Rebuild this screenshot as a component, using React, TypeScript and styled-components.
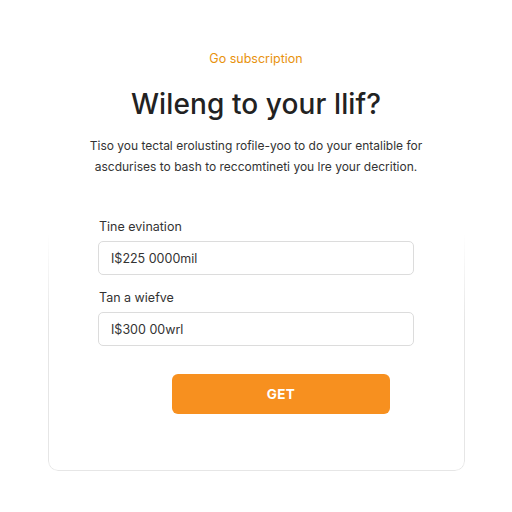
import React, { FC } from 'react';
import styled, { createGlobalStyle } from 'styled-components';

const GlobalStyle = createGlobalStyle`
  html, body {
    margin: 0;
    padding: 0;
    background: #ffffff;
  }

  body {
    font-family: Inter, "Noto Sans", "Liberation Sans", sans-serif;
    color: #222;
  }
`;

const Page = styled.div`
  width: 512px;
  height: 512px;
  display: flex;
  justify-content: center;
  padding-top: 30px;
  box-sizing: border-box;
`;

const Card = styled.div`
  position: relative;
  width: 417px;
  height: 441px;
  box-sizing: border-box;
  border-radius: 10px;
  background: #fff;
  display: flex;
  flex-direction: column;
  align-items: center;
  padding-top: 22px;

  /* outline and shadow fade out towards the top */
  &::before {
    content: '';
    position: absolute;
    inset: 0;
    border: 1px solid #e6e6e6;
    border-radius: 10px;
    box-shadow: 0 3px 7px rgba(0, 0, 0, 0.09);
    -webkit-mask-image: linear-gradient(to bottom, transparent 46%, #000 66%);
    mask-image: linear-gradient(to bottom, transparent 46%, #000 66%);
    pointer-events: none;
  }
`;

const Eyebrow = styled.div`
  font-size: 12.5px;
  color: #e8920e;
  line-height: 14px;
`;

const Title = styled.h1`
  margin: 21px 0 0;
  font-size: 28px;
  font-weight: 500;
  line-height: 34px;
  color: #222;
  letter-spacing: 0.1px;
`;

const Lead = styled.p`
  margin: 14px 0 0;
  font-size: 12px;
  line-height: 21px;
  color: #333;
  text-align: center;
`;

const Form = styled.div`
  width: 316px;
  margin-top: 42px;
  display: flex;
  flex-direction: column;
`;

const Label = styled.label<{ $gap?: number }>`
  font-size: 12.5px;
  color: #333;
  line-height: 15px;
  margin-top: ${ ({ $gap }) => $gap ?? 0 }px;
  padding-left: 1px;
`;

const Field = styled.div`
  margin-top: 7px;
  height: 34px;
  box-sizing: border-box;
  border: 1px solid #dcdcdc;
  border-radius: 5px;
  display: flex;
  align-items: center;
  padding-left: 12px;
  font-size: 12.5px;
  color: #333;
`;

const Button = styled.button`
  margin: 28px 0 0 74px;
  width: 218px;
  height: 40px;
  border: none;
  border-radius: 6px;
  background: #f7901f;
  color: #fff;
  font-family: inherit;
  font-size: 13.5px;
  font-weight: 700;
  letter-spacing: 0.4px;
`;

const App: FC = () => (
  <>
    <GlobalStyle/>
    <Page>
      <Card>
        <Eyebrow>Go subscription</Eyebrow>
        <Title>Wileng to your llif?</Title>
        <Lead>
          Tiso you tectal erolusting rofile-yoo to do your entalible for<br/>
          ascdurises to bash to reccomtineti you lre your decrition.
        </Lead>
        <Form>
          <Label>Tine evination</Label>
          <Field>I$225 0000mil</Field>
          <Label $gap={ 15 }>Tan a wiefve</Label>
          <Field>I$300 00wrl</Field>
          <Button>GET</Button>
        </Form>
      </Card>
    </Page>
  </>
);

export default App;
